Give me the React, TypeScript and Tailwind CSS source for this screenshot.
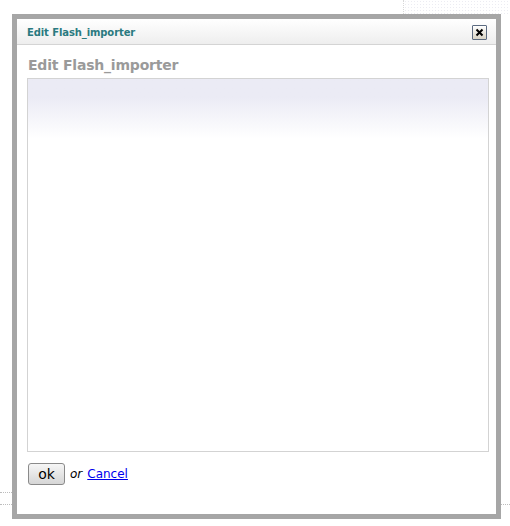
export default function App() {
  return (
    <div className="relative w-[510px] h-[526px] bg-white overflow-hidden">
      {/* page background bits peeking around the dialog */}
      <div className="absolute left-[403px] top-0 w-[107px] h-[14px] border-l border-dotted border-[#d8d8d8] bg-[radial-gradient(#ececf2_1px,transparent_1px)] bg-[length:3px_3px]" />
      <div className="absolute left-0 top-[492px] w-[12px] border-t border-dotted border-[#bdbdbd]" />
      <div className="absolute left-0 top-[504px] w-[12px] border-t border-dotted border-[#bdbdbd]" />
      <div className="absolute left-[501px] top-[504px] w-[9px] border-t border-dotted border-[#bdbdbd]" />

      <div className="relative ml-[12px] mt-[14px] w-[489px] h-[505px] border-[5px] border-[#a6a6a6] bg-white flex flex-col font-['DejaVu_Sans',sans-serif]">
        <div className="h-[26px] shrink-0 flex items-center justify-between pl-[10px] pr-[9px] border-b border-[#d4d4d4] bg-gradient-to-b from-white to-[#eeeeee]">
          <span className="text-[10px] font-bold text-[#2a7a80] tracking-[-0.1px] pt-[1px]">
            Edit Flash_importer
          </span>
          <button className="w-[15px] h-[15px] mt-[1px] flex items-center justify-center border border-[#5b6a80] rounded-[1px] bg-gradient-to-b from-white to-[#d9d4c6]">
            <svg width="9" height="9" viewBox="0 0 9 9">
              <path d="M1.5 1.5 L7.5 7.5 M7.5 1.5 L1.5 7.5" stroke="#000" strokeWidth="2" />
            </svg>
          </button>
        </div>

        <div className="flex-1 flex flex-col pl-[10px] pr-[7px] pt-[11px]">
          <h1 className="text-[14px] leading-[18px] font-bold text-[#9a9a9a] pl-[1px] tracking-[-0.2px]">
            Edit Flash_importer
          </h1>
          <div className="mt-[4px] h-[374px] border border-[#d3d3d3] bg-gradient-to-b from-[#ebebf5] from-[5%] to-white to-[16%]" />
          <div className="mt-[11px] flex items-center gap-[5px] pl-[1px]">
            <button className="w-[37px] h-[22px] rounded-[3px] border border-[#8a8a8a] bg-gradient-to-b from-[#f6f6f6] to-[#d6d6d6] text-[14px] leading-none text-black">
              ok
            </button>
            <span className="text-[12px] italic text-black">or</span>
            <a href="#" className="text-[12px] text-[#0000ee] underline">
              Cancel
            </a>
          </div>
        </div>
      </div>
    </div>
  );
}
